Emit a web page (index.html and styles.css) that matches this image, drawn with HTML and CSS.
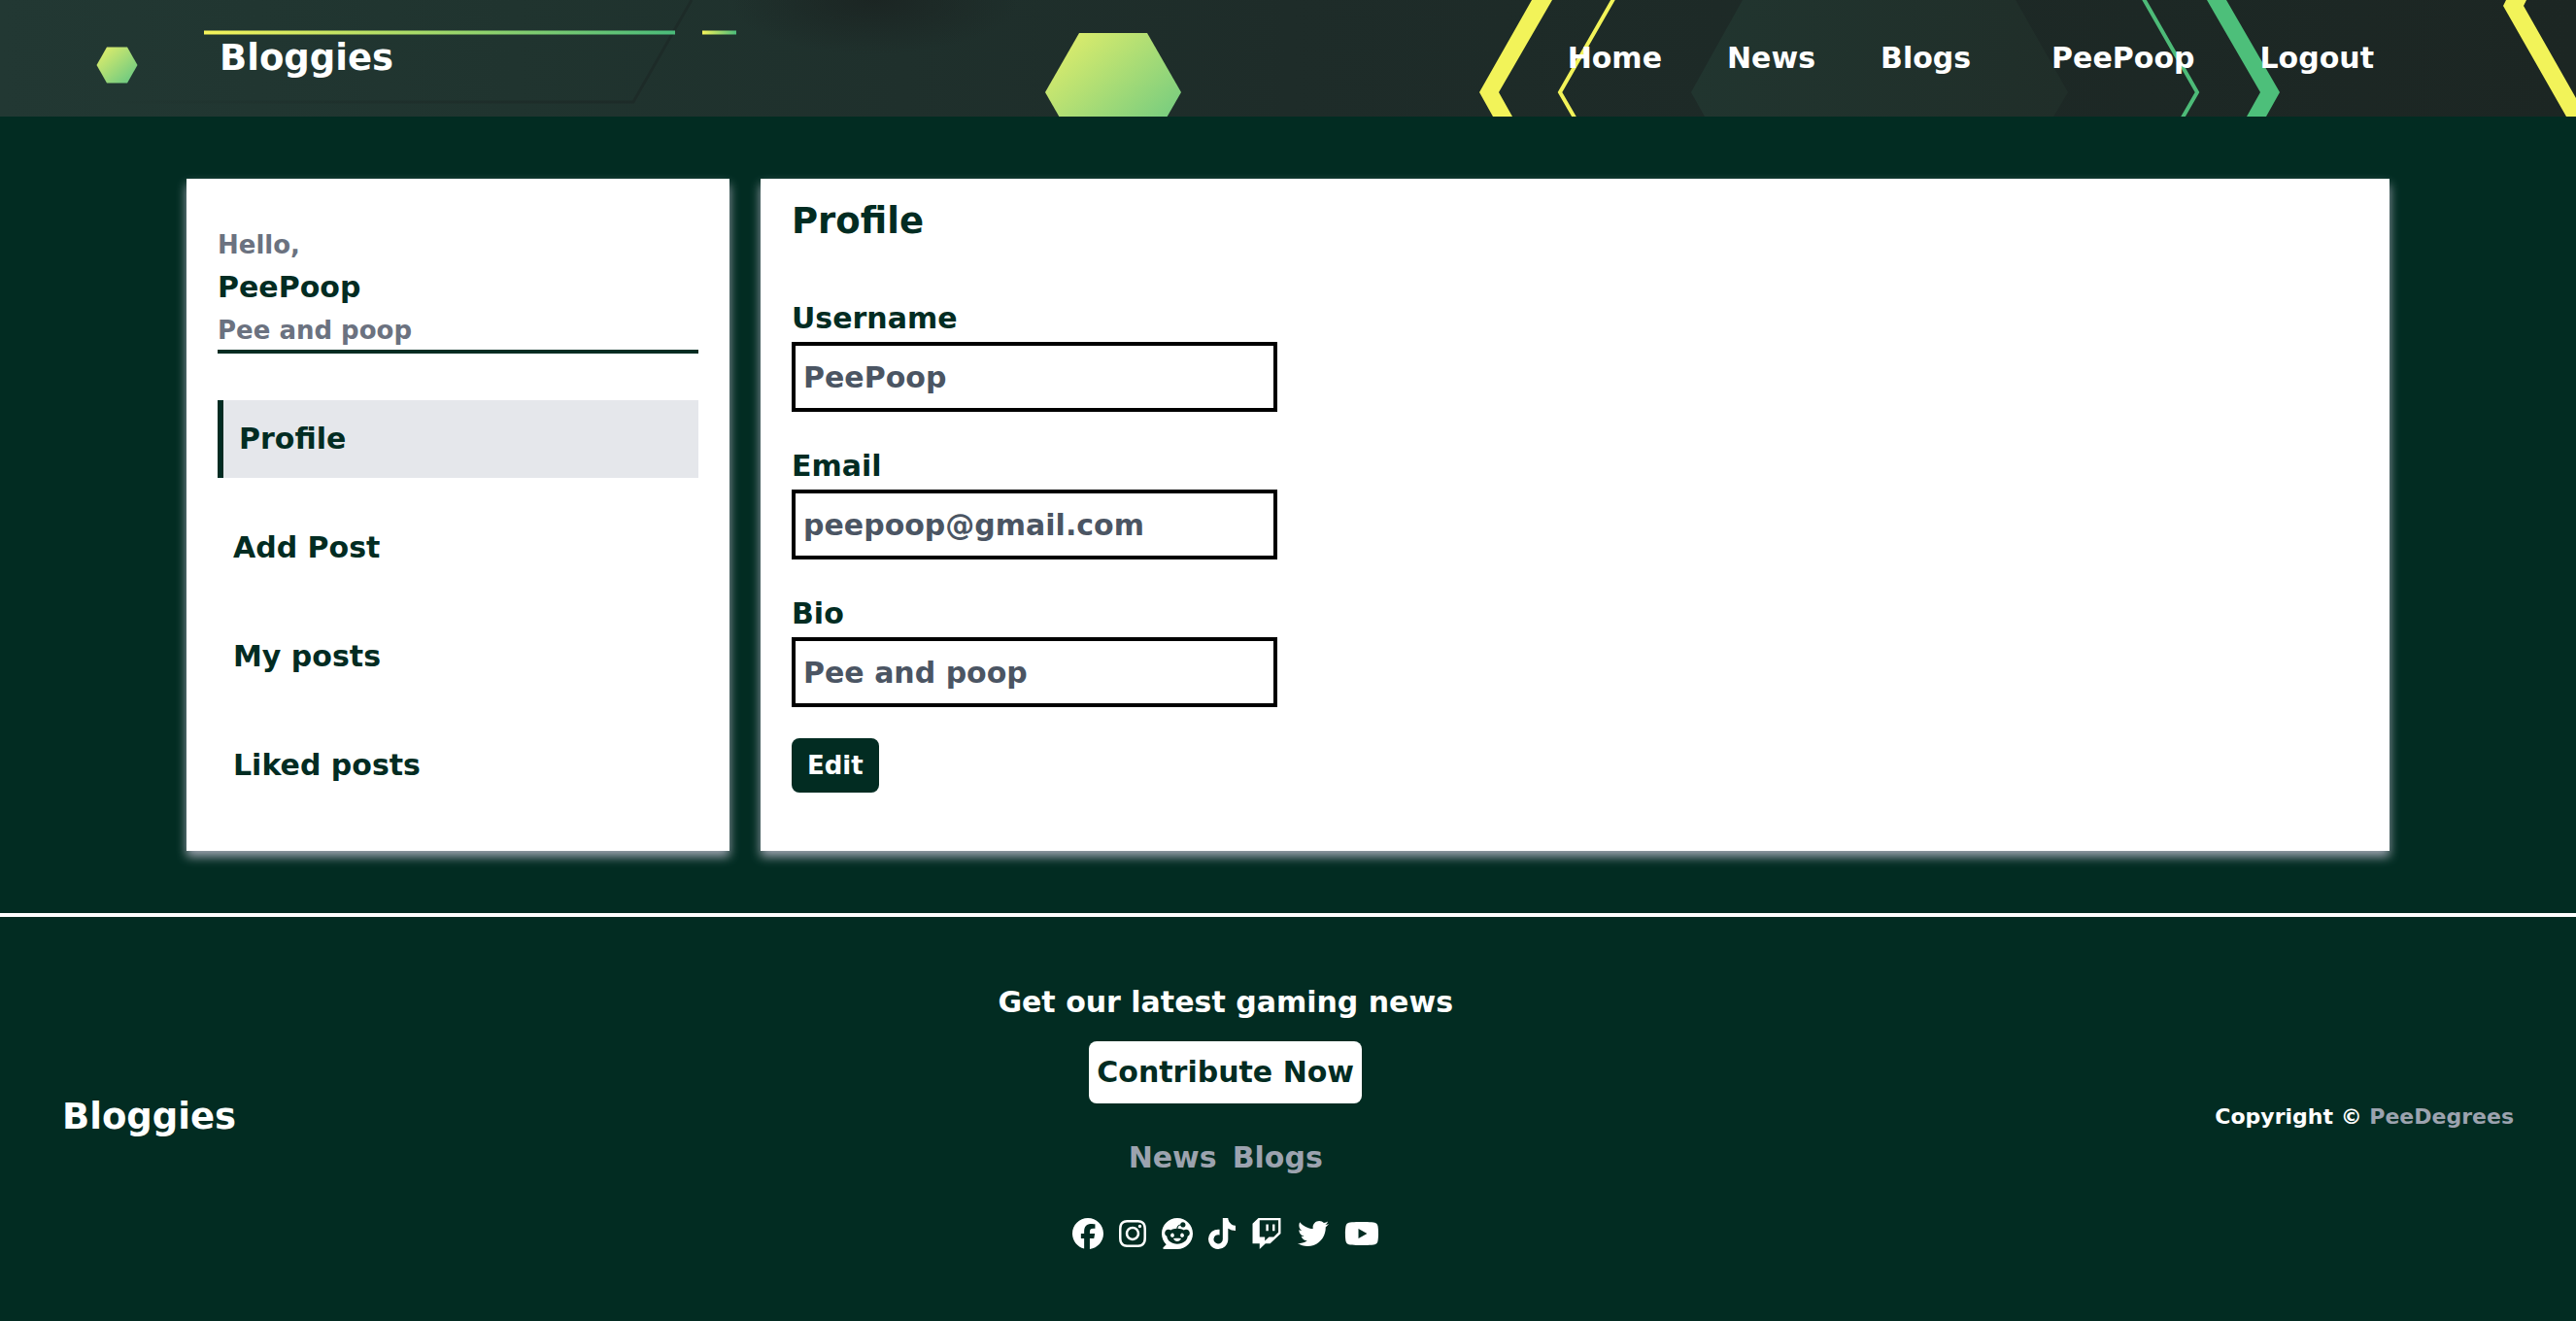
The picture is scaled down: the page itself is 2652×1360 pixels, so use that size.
FILE: index.html
```html
<!DOCTYPE html>
<html lang="en">
<head>
<meta charset="utf-8">
<meta name="viewport" content="width=device-width, initial-scale=1">
<title>Bloggies - Profile</title>
<link rel="stylesheet" href="styles.css">
</head>
<body>
<header class="site-header">
  <svg class="header-art" viewBox="0 0 2652 120" preserveAspectRatio="xMidYMin slice" aria-hidden="true">
    <defs>
      <linearGradient id="night" x1="0" y1="0" x2="1" y2="0">
        <stop offset="0" stop-color="#223833"/>
        <stop offset="0.2" stop-color="#20342f"/>
        <stop offset="0.5" stop-color="#1e2c29"/>
        <stop offset="1" stop-color="#1c2623"/>
      </linearGradient>
      <linearGradient id="lime" x1="0" y1="0" x2="1" y2="0">
        <stop offset="0" stop-color="#f5f35a"/>
        <stop offset="1" stop-color="#4abb7a"/>
      </linearGradient>
      <linearGradient id="hex" x1="0" y1="0" x2="1" y2="1">
        <stop offset="0" stop-color="#e9f069"/>
        <stop offset="1" stop-color="#5fc584"/>
      </linearGradient>
      <linearGradient id="panel" x1="0" y1="0" x2="1" y2="0">
        <stop offset="0" stop-color="#21352f"/>
        <stop offset="1" stop-color="#202e29"/>
      </linearGradient>
      <linearGradient id="trace" gradientUnits="userSpaceOnUse" x1="100" y1="0" x2="652" y2="0">
        <stop offset="0" stop-color="#1d2b28" stop-opacity="0"/>
        <stop offset="1" stop-color="#1d2b28"/>
      </linearGradient>
      <radialGradient id="shade">
        <stop offset="0" stop-color="#1b2422" stop-opacity="0.9"/>
        <stop offset="1" stop-color="#1b2422" stop-opacity="0"/>
      </radialGradient>
    </defs>
    <rect width="2652" height="120" fill="url(#night)"/>
    <ellipse cx="900" cy="0" rx="150" ry="56" fill="url(#shade)"/>
    <path d="M100 105H652L712 0" fill="none" stroke="url(#trace)" stroke-width="3"/>
    <rect x="210" y="31.500" width="485" height="4" fill="url(#lime)"/>
    <rect x="723" y="31.500" width="35" height="4" fill="url(#lime)"/>
    <path d="M110 48.500h21l10.500 18.500-10.500 18.500h-21L99.500 67z" fill="url(#hex)"/>
    <path d="M1111 34h70l35 61-35 61h-70l-35-61z" fill="url(#hex)"/>
    <path d="M1794 0H2075L2129 95L2114 120H1755L1741 95z" fill="url(#panel)"/>
    <path d="M1577 0h21l-55 95 14 25h-20l-14-25z" fill="#f2f359"/>
    <path d="M1661 -1l-55 96 15 26" fill="none" stroke="#f2f359" stroke-width="4"/>
    <path d="M2207 -1l55 96-15 26" fill="none" stroke="#4dbb78" stroke-width="4"/>
    <path d="M2272 0h20l55 95-14 25h-20l14-25z" fill="#4dbf7a"/>
    <path d="M2580 0h21l-3 6 54 95v19h-10L2577 6z" fill="#f2f359"/>
  </svg>
  <a class="brand" href="#">Bloggies</a>
  <nav class="main-nav" aria-label="Main">
    <a href="#">Home</a>
    <a href="#">News</a>
    <a href="#">Blogs</a>
    <a class="account" href="#">PeePoop</a>
    <a href="#">Logout</a>
  </nav>
</header>

<main class="dashboard">
  <aside class="card sidebar">
    <div class="greeting">
      <p class="muted">Hello,</p>
      <p class="name">PeePoop</p>
      <p class="muted">Pee and poop</p>
    </div>
    <nav class="side-nav" aria-label="Account">
      <a class="active" href="#" aria-current="page">Profile</a>
      <a href="#">Add Post</a>
      <a href="#">My posts</a>
      <a href="#">Liked posts</a>
    </nav>
  </aside>

  <section class="card profile">
    <h1>Profile</h1>
    <form class="profile-form">
      <div class="field">
        <label for="username">Username</label>
        <input id="username" type="text" value="PeePoop" readonly>
      </div>
      <div class="field">
        <label for="email">Email</label>
        <input id="email" type="email" value="peepoop@gmail.com" readonly>
      </div>
      <div class="field">
        <label for="bio">Bio</label>
        <input id="bio" type="text" value="Pee and poop" readonly>
      </div>
      <button class="edit" type="button">Edit</button>
    </form>
  </section>
</main>

<footer class="site-footer">
  <a class="brand" href="#">Bloggies</a>
  <div class="footer-main">
    <p class="tagline">Get our latest gaming news</p>
    <button class="contribute" type="button">Contribute Now</button>
    <nav class="footer-nav" aria-label="Footer">
      <a href="#">News</a>
      <a href="#">Blogs</a>
    </nav>
    <div class="social">
      <a href="#" aria-label="Facebook"><svg viewBox="0 0 512 512"><path d="M512 256C512 114.600 397.400 0 256 0S0 114.600 0 256C0 376 82.700 476.800 194.200 504.500V334.200H141.400V256h52.800V222.300c0-87.100 39.400-127.500 125-127.500c16.200 0 44.200 3.200 55.700 6.400V172c-6-.6-16.500-1-29.600-1c-42 0-58.200 15.900-58.200 57.200V256h83.600l-14.400 78.200H287V510.100C413.800 494.800 512 386.900 512 256h0z"/></svg></a>
      <a href="#" aria-label="Instagram"><svg viewBox="0 0 448 512"><path d="M224.1 141c-63.6 0-114.9 51.3-114.9 114.9s51.3 114.9 114.9 114.9S339 319.500 339 255.900 287.700 141 224.100 141zm0 189.600c-41.100 0-74.700-33.500-74.700-74.700s33.500-74.700 74.700-74.700 74.700 33.500 74.700 74.700-33.600 74.700-74.700 74.700zm146.400-194.300c0 14.900-12 26.800-26.800 26.800-14.900 0-26.800-12-26.800-26.800s12-26.800 26.800-26.800 26.800 12 26.800 26.800zm76.100 27.200c-1.700-35.900-9.900-67.700-36.200-93.900-26.200-26.200-58-34.400-93.900-36.200-37-2.100-147.900-2.100-184.900 0-35.800 1.700-67.600 9.900-93.900 36.100s-34.400 58-36.200 93.900c-2.100 37-2.100 147.900 0 184.900 1.700 35.900 9.900 67.700 36.200 93.900s58 34.400 93.900 36.200c37 2.100 147.900 2.100 184.900 0 35.900-1.700 67.700-9.900 93.900-36.200 26.200-26.200 34.400-58 36.200-93.900 2.100-37 2.100-147.800 0-184.800zM398.800 388c-7.800 19.600-22.900 34.700-42.600 42.600-29.500 11.700-99.500 9-132.100 9s-102.700 2.600-132.100-9c-19.600-7.800-34.700-22.900-42.600-42.600-11.700-29.500-9-99.500-9-132.100s-2.600-102.700 9-132.100c7.800-19.600 22.900-34.700 42.600-42.600 29.500-11.700 99.500-9 132.100-9s102.700-2.600 132.100 9c19.600 7.800 34.700 22.900 42.600 42.600 11.700 29.500 9 99.500 9 132.100s2.700 102.700-9 132.100z"/></svg></a>
      <a href="#" aria-label="Reddit"><svg viewBox="0 0 512 512"><path d="M0 256C0 114.600 114.600 0 256 0S512 114.600 512 256s-114.600 256-256 256L37.100 512c-13.700 0-20.500-16.500-10.900-26.200L75 437C28.700 390.700 0 326.700 0 256zM349.600 153.600c23.600 0 42.700-19.100 42.700-42.700s-19.100-42.700-42.700-42.700c-20.600 0-37.800 14.600-41.800 34c-34.500 3.700-61.400 33-61.400 68.400l0 .2c-37.500 1.600-71.800 12.300-99 29.100c-10.100-7.800-22.800-12.500-36.500-12.500c-33 0-59.800 26.800-59.800 59.800c0 24 14.100 44.600 34.400 54.100c2 69.400 77.600 125.200 170.600 125.200s168.700-55.900 170.600-125.300c20.200-9.600 34.100-30.200 34.100-54c0-33-26.800-59.800-59.800-59.800c-13.700 0-26.300 4.600-36.400 12.400c-27.400-17-62.100-27.700-100-29.100l0-.2c0-25.400 18.900-46.500 43.400-49.900l0 0c4.400 18.800 21.300 32.800 41.500 32.800zM177.100 246.900c16.700 0 29.500 17.600 28.500 39.300s-13.500 29.600-30.300 29.600s-31.400-8.800-30.400-30.500s15.400-38.300 32.100-38.300zm190.100 38.300c1 21.700-13.700 30.500-30.400 30.500s-29.300-7.900-30.300-29.600c-1-21.700 11.800-39.300 28.500-39.300s31.200 16.600 32.100 38.300zm-48.100 56.700c-10.300 24.600-34.600 41.900-63 41.900s-52.700-17.300-63-41.900c-1.200-2.900 .8-6.200 3.900-6.500c18.400-1.900 38.300-2.900 59.100-2.900s40.700 1 59.100 2.900c3.100 .3 5.100 3.600 3.900 6.500z"/></svg></a>
      <a href="#" aria-label="TikTok"><svg viewBox="0 0 448 512"><path d="M448,209.910a210.060,210.060,0,0,1-122.770-39.250V349.380A162.550,162.550,0,1,1,185,188.310V278.200a74.620,74.620,0,1,0,52.230,71.180V0l88,0a121.180,121.180,0,0,0,1.860,22.170h0A122.180,122.180,0,0,0,381,102.390a121.430,121.430,0,0,0,67,20.140Z"/></svg></a>
      <a href="#" aria-label="Twitch"><svg viewBox="0 0 512 512"><path d="M391.170,103.470H352.540v109.700h38.630ZM285,103H246.370V212.750H285ZM120.830,0,24.310,91.420V420.580H140.140V512l96.530-91.420h77.250L487.690,256V0ZM449.070,237.750l-77.220,73.120H294.610l-67.600,64v-64H140.140V36.580H449.070Z"/></svg></a>
      <a href="#" aria-label="Twitter"><svg viewBox="0 0 512 512"><path d="M459.370 151.716c.325 4.548.325 9.097.325 13.645 0 138.720-105.583 298.558-298.558 298.558-59.452 0-114.680-17.219-161.137-47.106 8.447.974 16.568 1.299 25.340 1.299 49.055 0 94.213-16.568 130.274-44.832-46.132-.975-84.792-31.188-98.112-72.772 6.498.974 12.995 1.624 19.818 1.624 9.421 0 18.843-1.300 27.614-3.573-48.081-9.747-84.143-51.980-84.143-102.985v-1.299c13.969 7.797 30.214 12.670 47.431 13.319-28.264-18.843-46.781-51.005-46.781-87.391 0-19.492 5.197-37.360 14.294-52.954 51.655 63.675 129.300 105.258 216.365 109.807-1.624-7.797-2.599-15.918-2.599-24.040 0-57.828 46.782-104.934 104.934-104.934 30.213 0 57.502 12.670 76.670 33.137 23.715-4.548 46.456-13.320 66.599-25.340-7.798 24.366-24.366 44.833-46.132 57.827 21.117-2.273 41.584-8.122 60.426-16.243-14.292 20.791-32.161 39.308-52.628 54.253z"/></svg></a>
      <a href="#" aria-label="YouTube"><svg viewBox="0 0 576 512"><path d="M549.655 124.083c-6.281-23.650-24.787-42.276-48.284-48.597C458.781 64 288 64 288 64S117.220 64 74.629 75.486c-23.497 6.322-42.003 24.947-48.284 48.597-11.412 42.867-11.412 132.305-11.412 132.305s0 89.438 11.412 132.305c6.281 23.650 24.787 41.500 48.284 47.821C117.220 448 288 448 288 448s170.780 0 213.371-11.486c23.497-6.321 42.003-24.171 48.284-47.821 11.412-42.867 11.412-132.305 11.412-132.305s0-89.438-11.412-132.305zm-317.510 213.508V175.185l142.739 81.205-142.739 81.201z"/></svg></a>
    </div>
  </div>
  <p class="copyright">Copyright © <a href="#">PeeDegrees</a></p>
</footer>
</body>
</html>
```
FILE: styles.css
```css
:root {
  --forest: #022c22;
  --gray-200: #e5e7eb;
  --gray-400: #9ca3af;
  --gray-500: #6b7280;
  --gray-600: #4b5563;
}

* {
  box-sizing: border-box;
}

body {
  margin: 0;
  background: var(--forest);
  color: var(--forest);
  font-family: "DejaVu Sans", sans-serif;
  font-size: 30px;
  font-weight: 700;
  line-height: 48px;
}

p,
h1 {
  margin: 0;
}

a {
  color: inherit;
  text-decoration: none;
}

button,
input {
  font: inherit;
}

button {
  border: 0;
  cursor: pointer;
}

.brand {
  color: #fff;
  font-size: 37px;
}

/* Header */
.site-header {
  position: relative;
  display: flex;
  align-items: center;
  justify-content: space-between;
  height: 120px;
  padding: 0 208px 0 226px;
  overflow: hidden;
  color: #fff;
}

.header-art {
  position: absolute;
  inset: 0;
  z-index: -1;
  width: 100%;
  height: 100%;
}

.main-nav {
  display: flex;
  gap: 67px;
}

.account {
  padding-left: 16px;
}

/* Dashboard */
.dashboard {
  display: grid;
  grid-template-columns: 1fr 3fr;
  gap: 32px;
  padding: 64px 192px;
}

.card {
  background: #fff;
  box-shadow: 0 6px 10px var(--gray-400);
}

.sidebar {
  padding: 48px 32px;
}

.greeting {
  margin-bottom: 48px;
  border-bottom: 4px solid var(--forest);
}

.muted {
  color: var(--gray-500);
  font-size: 26px;
  line-height: 40px;
}

.side-nav {
  display: flex;
  flex-direction: column;
  gap: 32px;
}

.side-nav a {
  padding: 16px;
}

.side-nav .active {
  border-left: 6px solid var(--forest);
  background: var(--gray-200);
}

.profile {
  padding: 16px 32px;
}

.profile h1 {
  margin-bottom: 48px;
  font-size: 37px;
  line-height: 56px;
}

.profile-form {
  display: flex;
  flex-direction: column;
  align-items: flex-start;
  gap: 32px;
}

.field {
  display: flex;
  flex-direction: column;
  width: 500px;
  max-width: 100%;
}

.field input {
  width: 100%;
  height: 72px;
  padding: 0 8px;
  border: 4px solid #000;
  background: #fff;
  color: var(--gray-600);
}

.edit {
  padding: 4px 16px;
  border-radius: 8px;
  background: var(--forest);
  color: #fff;
  font-size: 26px;
}

/* Footer */
.site-footer {
  display: flex;
  align-items: center;
  justify-content: space-between;
  padding: 64px;
  border-top: 4px solid #fff;
  color: #fff;
}

.footer-main {
  display: flex;
  flex-direction: column;
  align-items: center;
}

.contribute {
  margin: 16px 0 32px;
  padding: 8px;
  border-radius: 8px;
  background: #fff;
  color: var(--forest);
}

.footer-nav {
  display: flex;
  gap: 16px;
  margin-bottom: 32px;
  color: var(--gray-400);
}

.social {
  display: flex;
  align-items: center;
  gap: 16px;
  height: 44px;
}

.social a {
  display: flex;
}

.social svg {
  height: 32px;
  fill: #fff;
}

.copyright {
  font-size: 22px;
}

.copyright a {
  color: var(--gray-400);
}
```
